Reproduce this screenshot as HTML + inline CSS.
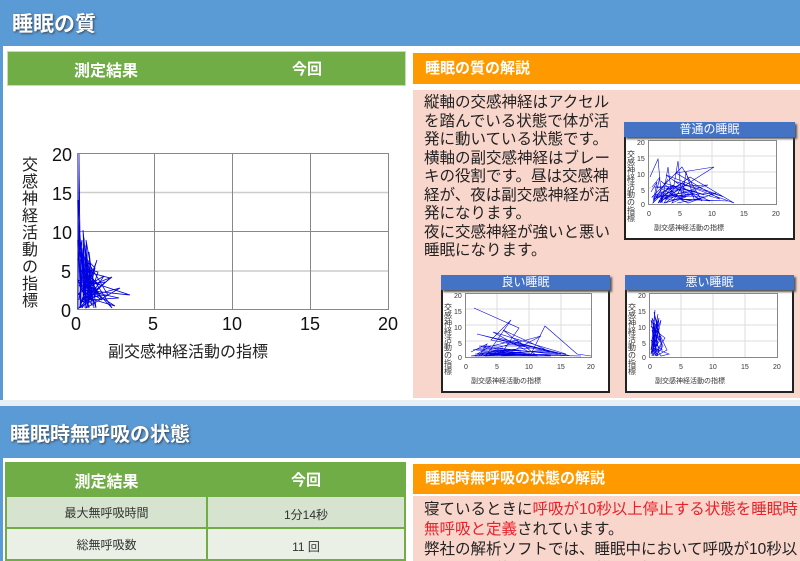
<!DOCTYPE html>
<html style="width:800px;height:561px;overflow:hidden"><head><meta charset="utf-8"><style>
*{margin:0;padding:0;box-sizing:border-box}
body{width:800px;height:561px;overflow:hidden;background:#5b9bd5;font-family:"Liberation Sans","Noto Sans CJK JP",sans-serif;position:relative}
.abs{position:absolute}
.hdr{color:#fff;font-weight:bold;font-size:21px;text-shadow:1px 1px 2px #345}
.panel{background:#fff}
.green{background:#70ad47;color:#fff;font-weight:bold;font-size:16px;border:1px solid #c5dfb5}
.orange{background:#ff9900;color:#fff;font-weight:bold;font-size:15px;padding-left:12px;line-height:31px}
.pink{background:#f8d6cc}
.txt{font-size:15.5px;color:#222;line-height:18.5px}
.mini{background:#fff;border:2px solid #222;border-top:none}
.mt{background:#4472c4;color:#fff;font-size:12px;text-align:center;height:15px;line-height:15px;box-shadow:2px 2px 2px #555}
td{border:2px solid #70ad47;font-size:12px;text-align:center;color:#333}
.red{color:#e8212b}
</style></head><body>
<div class="abs hdr" style="left:12px;top:8px">睡眠の質</div>
<div class="abs panel" style="left:3px;top:46px;width:797px;height:354px"></div>
<div class="abs green" style="left:7px;top:51px;width:399px;height:35px">
<span class="abs" style="left:66px;top:5px">測定結果</span><span class="abs" style="left:284px;top:6px;font-size:15px">今回</span></div>
<svg class="abs" style="left:0;top:140px" width="410" height="230">
<g stroke="#ccc" stroke-width="1.5"><line x1="77" y1="52.5" x2="388" y2="52.5"/><line x1="77" y1="131" x2="388" y2="131"/></g>
<g stroke="#888" fill="none"><rect x="77.5" y="13.5" width="311" height="156"/><line x1="154.5" y1="13" x2="154.5" y2="169"/><line x1="232.5" y1="13" x2="232.5" y2="169"/><line x1="310.5" y1="13" x2="310.5" y2="169"/><line x1="77" y1="91.5" x2="388" y2="91.5"/></g>
<g stroke="#0000e0" stroke-width="0.8" fill="none">
<polyline points="78,169 79,14 80,120 78,60 81,165 80,95 84,150 82,108 86,160 83,90 88,140 85,118 90,160 86,100 95,150 84,132 100,145 80,130 110,138 87,160 119,158 83,150 130,155 85,140 112,168 81,120 96,168 89,112 92,165 79,145 102,160 84,128 98,132 86,168 120,148 82,158 108,155 88,122 94,168"/>
<polyline points="79,30 81,168 78,100 83,125 79,160 87,115 81,148 90,138 78,155 93,142 80,165 97,120 82,168 104,136 80,150 112,137 83,160 99,152 78,140 89,168 85,105 91,160 80,112 95,128 88,158 115,166 82,145 105,142 79,168"/>
<polyline points="78,120 82,100 80,168 84,98 83,162 87,112 85,168 91,130 84,155 96,148 81,135 88,150 79,168 93,160 86,145 100,155 82,162 90,125 87,168"/>
</g>
<g font-size="18" fill="#111"><text x="52" y="21">20</text><text x="52" y="60">15</text><text x="52" y="99">10</text><text x="61" y="138">5</text><text x="61" y="177">0</text>
<text x="71" y="190">0</text><text x="148" y="190">5</text><text x="222" y="190">10</text><text x="300" y="190">15</text><text x="378" y="190">20</text></g>
<text x="108" y="217" font-size="16" fill="#222">副交感神経活動の指標</text>
<g font-size="16" fill="#222"><text x="22" y="30">交</text><text x="22" y="47">感</text><text x="22" y="64">神</text><text x="22" y="81">経</text><text x="22" y="98">活</text><text x="22" y="115">動</text><text x="22" y="132">の</text><text x="22" y="149">指</text><text x="22" y="166">標</text></g>
</svg>
<div class="abs orange" style="left:413px;top:53px;width:387px;height:31px">睡眠の質の解説</div>
<div class="abs pink" style="left:413px;top:90px;width:387px;height:308px"></div>
<div class="abs txt" style="left:424px;top:94px;width:192px">縦軸の交感神経はアクセルを踏んでいる状態で体が活発に動いている状態です。横軸の副交感神経はブレーキの役割です。昼は交感神経が、夜は副交感神経が活発になります。<br>夜に交感神経が強いと悪い睡眠になります。</div>

<div class="abs mini" style="left:624px;top:122px;width:171px;height:118px"></div>
<div class="abs mt" style="left:624px;top:122px;width:171px">普通の睡眠</div>
<svg class="abs" style="left:624px;top:137px" width="171" height="103">
<rect x="24.5" y="3.5" width="128" height="64" fill="#fff" stroke="#888"/>
<g stroke="#ddd"><line x1="56" y1="4" x2="56" y2="67"/><line x1="88" y1="4" x2="88" y2="67"/><line x1="120" y1="4" x2="120" y2="67"/><line x1="25" y1="19" x2="152" y2="19"/><line x1="25" y1="35" x2="152" y2="35"/><line x1="25" y1="51" x2="152" y2="51"/></g>
<g stroke="#0000e0" stroke-width="0.6" fill="none"><polyline points="26,40 34,22 38,66 44,30 48,60 54,24 58,64 62,35 70,62 86,64 60,52 80,58 40,46 96,62 52,36 90,30 46,58 72,54 30,50 84,48 36,62 66,40 110,66 50,44 100,60 42,38 78,64 58,30 28,60 92,56 64,66 38,52"/>
<polyline points="27,55 33,45 29,66 45,50 35,64 55,56 41,66 63,58 47,48 75,62 53,66 82,60 31,58 60,46 48,66 70,56 40,62 104,64 57,62 37,44"/>
<polyline points="28,50 36,40 30,64 44,42 32,60 50,48 34,66 56,52 38,58 62,60 40,66 48,54 29,62 44,58 36,66"/></g>
<g font-size="7" fill="#333"><text x="13" y="8">20</text><text x="13" y="24">15</text><text x="13" y="40">10</text><text x="17" y="56">5</text><text x="17" y="70">0</text><text x="23" y="79">0</text><text x="54" y="79">5</text><text x="84" y="79">10</text><text x="116" y="79">15</text><text x="148" y="79">20</text><text x="30" y="93">副交感神経活動の指標</text></g>
<g font-size="8" fill="#333"><text x="3" y="20">交</text><text x="3" y="28">感</text><text x="3" y="36">神</text><text x="3" y="44">経</text><text x="3" y="52">活</text><text x="3" y="60">動</text><text x="3" y="68">の</text><text x="3" y="76">指</text><text x="3" y="84">標</text></g>
</svg>

<div class="abs mini" style="left:441px;top:275px;width:169px;height:118px"></div>
<div class="abs mt" style="left:441px;top:275px;width:169px">良い睡眠</div>
<svg class="abs" style="left:441px;top:290px" width="169" height="103">
<rect x="24.5" y="3.5" width="126" height="64" fill="#fff" stroke="#888"/>
<g stroke="#ddd"><line x1="56" y1="4" x2="56" y2="67"/><line x1="88" y1="4" x2="88" y2="67"/><line x1="120" y1="4" x2="120" y2="67"/><line x1="25" y1="19" x2="150" y2="19"/><line x1="25" y1="35" x2="150" y2="35"/><line x1="25" y1="51" x2="150" y2="51"/></g>
<g stroke="#0000e0" stroke-width="0.6" fill="none"><polyline points="33,18 78,38 60,64 40,62 90,58 36,44 120,64 50,50 70,30 45,66 104,60 58,48 130,66 38,56 82,56 62,40 110,62 48,60 100,46 66,64 140,66 34,64 88,62 52,42 125,64 42,58 76,50 96,66 55,62"/>
<polyline points="30,62 46,54 38,66 62,58 35,60 85,64 44,66 70,60 30,66 117,64 60,66 90,64 104,36 136,64 150,66"/>
<polyline points="32,60 50,56 36,64 66,60 40,66 80,62 46,64 96,66 54,60 110,66 34,66 72,64"/></g>
<g font-size="7" fill="#333"><text x="13" y="8">20</text><text x="13" y="24">15</text><text x="13" y="40">10</text><text x="17" y="56">5</text><text x="17" y="70">0</text><text x="23" y="79">0</text><text x="54" y="79">5</text><text x="84" y="79">10</text><text x="116" y="79">15</text><text x="146" y="79">20</text><text x="30" y="93">副交感神経活動の指標</text></g>
<g font-size="8" fill="#333"><text x="3" y="20">交</text><text x="3" y="28">感</text><text x="3" y="36">神</text><text x="3" y="44">経</text><text x="3" y="52">活</text><text x="3" y="60">動</text><text x="3" y="68">の</text><text x="3" y="76">指</text><text x="3" y="84">標</text></g>
</svg>

<div class="abs mini" style="left:625px;top:275px;width:169px;height:118px"></div>
<div class="abs mt" style="left:625px;top:275px;width:169px">悪い睡眠</div>
<svg class="abs" style="left:625px;top:290px" width="169" height="103">
<rect x="24.5" y="3.5" width="128" height="64" fill="#fff" stroke="#888"/>
<g stroke="#ddd"><line x1="56" y1="4" x2="56" y2="67"/><line x1="88" y1="4" x2="88" y2="67"/><line x1="120" y1="4" x2="120" y2="67"/><line x1="25" y1="19" x2="152" y2="19"/><line x1="25" y1="35" x2="152" y2="35"/><line x1="25" y1="51" x2="152" y2="51"/></g>
<g stroke="#0000e0" stroke-width="0.6" fill="none"><polyline points="26,60 30,20 27,66 33,24 28,50 36,30 29,64 35,44 26,36 38,56 31,66 42,60 27,28 34,62 30,40 40,48 28,66 32,30 37,60 26,50 36,66 44,64 29,58 33,36"/>
<polyline points="27,40 31,60 26,30 35,50 28,62 33,42 29,22 37,54 30,66 34,28 27,56 32,48 26,64 30,34 28,58 33,66 27,46"/></g>
<g font-size="7" fill="#333"><text x="13" y="8">20</text><text x="13" y="24">15</text><text x="13" y="40">10</text><text x="17" y="56">5</text><text x="17" y="70">0</text><text x="23" y="79">0</text><text x="54" y="79">5</text><text x="84" y="79">10</text><text x="116" y="79">15</text><text x="148" y="79">20</text><text x="30" y="93">副交感神経活動の指標</text></g>
<g font-size="8" fill="#333"><text x="3" y="20">交</text><text x="3" y="28">感</text><text x="3" y="36">神</text><text x="3" y="44">経</text><text x="3" y="52">活</text><text x="3" y="60">動</text><text x="3" y="68">の</text><text x="3" y="76">指</text><text x="3" y="84">標</text></g>
</svg>

<div class="abs" style="left:0;top:400px;width:800px;height:6px;background:#e8eef5"></div>
<div class="abs hdr" style="left:10px;top:418px;font-size:20px">睡眠時無呼吸の状態</div>
<div class="abs panel" style="left:3px;top:458px;width:797px;height:103px"></div>
<table class="abs" style="left:5px;top:462px;width:401px;border-collapse:collapse">
<tr style="height:33px"><td class="green" style="border:2px solid #70ad47;font-size:16px">測定結果</td><td class="green" style="border:2px solid #70ad47;font-size:15px">今回</td></tr>
<tr style="height:32px;background:#d5e3cf"><td style="width:201px">最大無呼吸時間</td><td style="padding-top:4px">1分14秒</td></tr>
<tr style="height:32px;background:#eaf0e6"><td>総無呼吸数</td><td style="padding-top:4px">11 回</td></tr>
</table>
<div class="abs orange" style="left:413px;top:464px;width:387px;height:30px;line-height:30px">睡眠時無呼吸の状態の解説</div>
<div class="abs pink" style="left:413px;top:496px;width:387px;height:65px"></div>
<div class="abs txt" style="left:424px;top:500px;width:376px;height:61px;overflow:hidden;font-size:15.5px;line-height:20px">寝ているときに<span class="red">呼吸が10秒以上停止する状態を睡眠時無呼吸と定義</span>されています。<br>弊社の解析ソフトでは、睡眠中において呼吸が10秒以上の停止が検知された回数を記録しています。</div>
</body></html>
